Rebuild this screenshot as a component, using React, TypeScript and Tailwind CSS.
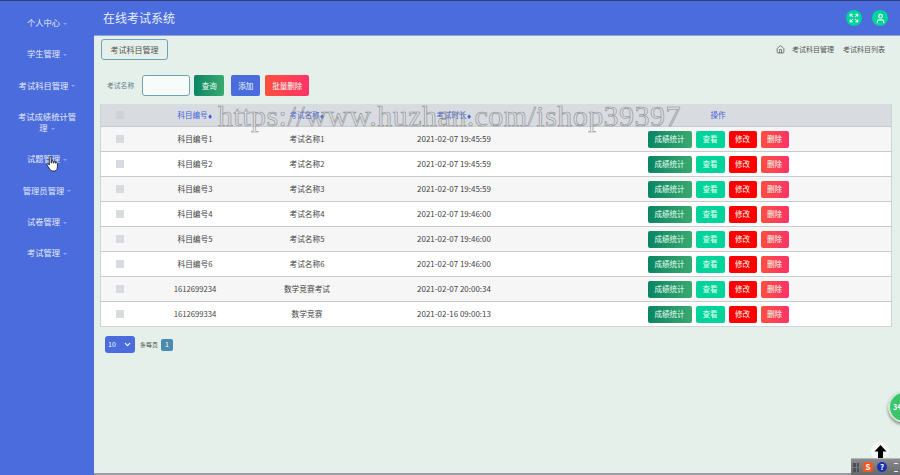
import { Home, Expand, User, ChevronDown } from "lucide-react";

interface Row {
  code: string;
  name: string;
  time: string;
}

const rows: Row[] = [
  { code: "科目编号1", name: "考试名称1", time: "2021-02-07 19:45:59" },
  { code: "科目编号2", name: "考试名称2", time: "2021-02-07 19:45:59" },
  { code: "科目编号3", name: "考试名称3", time: "2021-02-07 19:45:59" },
  { code: "科目编号4", name: "考试名称4", time: "2021-02-07 19:46:00" },
  { code: "科目编号5", name: "考试名称5", time: "2021-02-07 19:46:00" },
  { code: "科目编号6", name: "考试名称6", time: "2021-02-07 19:46:00" },
  { code: "1612699234", name: "数学竞赛考试", time: "2021-02-07 20:00:34" },
  { code: "1612699334", name: "数学竞赛", time: "2021-02-16 09:00:13" },
];

const menu = ["个人中心", "学生管理", "考试科目管理", "考试成绩统计管理", "试题管理", "管理员管理", "试卷管理", "考试管理"];

const gridCols = "grid grid-cols-[38px_112px_112px_182px_1fr] items-center";

function Sidebar() {
  return (
    <div className="w-[94px] shrink-0 bg-[#4a6cdc] pt-[6px] flex flex-col">
      {menu.map((m) => (
        <div key={m} className="px-[14px] py-[10px] text-center text-[8.3px] leading-[11.25px] text-[#e6ebfa]">
          {m}
          <span className="inline-block ml-[3px] align-middle border-x-[2.5px] border-t-[2.5px] border-x-transparent border-t-[#8fa5ea]" />
        </div>
      ))}
    </div>
  );
}

function Actions() {
  return (
    <div className="flex justify-center gap-[4px] text-[7.5px] text-[#eafff6]">
      <button className="w-[44px] h-[17px] rounded-[2px] bg-gradient-to-r from-[#078563] to-[#38a96f]">成绩统计</button>
      <button className="w-[29px] h-[17px] rounded-[2px] bg-[#00d49a]">查看</button>
      <button className="w-[28px] h-[17px] rounded-[2px] bg-[#ff0000]">修改</button>
      <button className="w-[28px] h-[17px] rounded-[2px] bg-gradient-to-r from-[#ff4d3d] to-[#ff3366]">删除</button>
    </div>
  );
}

function HeadCell({ label }: { label: string }) {
  return (
    <span>
      {label}
      <span className="text-[5px]">♦</span>
    </span>
  );
}

export default function App() {
  return (
    <div className="relative h-[475px] w-[900px] overflow-hidden flex flex-col bg-[#e5f0ea] font-['Noto_Sans_CJK_SC','Liberation_Sans',sans-serif]">
      <div className="h-[1px] bg-[#2f3f7c]" />
      <div className="flex flex-1 min-h-0">
        <Sidebar />
        <div className="flex-1 min-w-0 flex flex-col">
          <div className="h-[35px] shrink-0 bg-[#4a6cdc] border-b border-[#8fa5d8] flex items-center pl-[9px] pr-[12px]">
            <span className="text-[12px] text-[#e8edfb] pb-[1px]">在线考试系统</span>
            <div className="ml-auto flex gap-[10px]">
              <div className="w-[16px] h-[16px] rounded-full bg-[#00d49a] flex items-center justify-center">
                <Expand size={10} color="#eafff6" strokeWidth={2.5} />
              </div>
              <div className="w-[16px] h-[16px] rounded-full bg-[#00d49a] flex items-center justify-center">
                <User size={11} color="#eafff6" strokeWidth={2.5} />
              </div>
            </div>
          </div>

          <div className="pl-[6px] pr-[8px] flex-1">
            <div className="flex items-center justify-between mt-[3px]">
              <div className="ml-[1px] w-[67px] h-[21px] border border-[#6fa3b4] rounded-[3px] flex items-center justify-center text-[8px] text-[#555]">
                考试科目管理
              </div>
              <div className="flex items-center pr-[7px] text-[7px] text-[#555]">
                <Home size={9} color="#555" />
                <span className="ml-[7px]">考试科目管理</span>
                <span className="ml-[9px]">考试科目列表</span>
              </div>
            </div>

            <div className="flex items-center mt-[15px] pl-[7px]">
              <span className="text-[6.8px] text-[#5f7f8c]">考试名称</span>
              <input className="ml-[8px] w-[48px] h-[21px] rounded-[3px] border border-[#6fa3b4] bg-[#f7fbfa]" />
              <button className="ml-[4px] w-[30px] h-[21px] rounded-[2px] bg-gradient-to-r from-[#078563] to-[#38a96f] text-[7.5px] text-[#eafff6]">查询</button>
              <button className="ml-[7px] w-[29px] h-[21px] rounded-[2px] bg-[#4a6cdc] text-[7.5px] text-[#eafff6]">添加</button>
              <button className="ml-[5px] w-[44px] h-[21px] rounded-[2px] bg-gradient-to-r from-[#ff4d3d] to-[#ff3366] text-[7.5px] text-[#eafff6]">批量删除</button>
            </div>

            <div className="mt-[8px] border border-[#d0d3d6] border-t-0 bg-white text-[#444] text-[7.5px]">
              <div className={`${gridCols} h-[22px] bg-[#d8dce1] text-[#4463d8] text-center`}>
                <span className="mx-auto w-[8px] h-[8px] bg-[#cfd3d9]" />
                <HeadCell label="科目编号" />
                <HeadCell label="考试名称" />
                <HeadCell label="考试时长" />
                <span>操作</span>
              </div>
              {rows.map((r, i) => (
                <div key={r.code} className={`${gridCols} h-[25px] text-center border-t border-[#c9cccf] ${i % 2 === 0 ? "bg-[#f6f6f7]" : "bg-white"}`}>
                  <span className="mx-auto w-[8px] h-[8px] bg-[#d8dce1]" />
                  <span className="text-[7.7px]">{r.code}</span>
                  <span className="text-[7.7px]">{r.name}</span>
                  <span className="text-[8px]">{r.time}</span>
                  <Actions />
                </div>
              ))}
            </div>

            <div className="flex items-center mt-[9px] pl-[5px]">
              <div className="w-[30px] h-[17px] rounded-[3px] bg-[#4a6cdc] flex items-center justify-between px-[3px] text-[7px] text-white">
                10
                <ChevronDown size={9} color="white" strokeWidth={3} />
              </div>
              <span className="ml-[5px] text-[6px] text-[#555]">条每页</span>
              <span className="ml-[3px] w-[12px] h-[12px] rounded-[2px] bg-[#4a8bb0] text-white text-[7px] flex items-center justify-center">1</span>
            </div>
          </div>
        </div>
      </div>

      {/* watermark */}
      <div className="absolute left-[218px] top-[97px] text-[30px] leading-[38px] tracking-[0.45px] whitespace-nowrap font-['Liberation_Serif',serif] text-transparent [-webkit-text-stroke:0.6px_#8f8f8f]">
        https://www.huzhan.com/ishop39397
      </div>

      {/* captured mouse pointer */}
      <svg className="absolute left-[46px] top-[155px]" width="13" height="17" viewBox="0 0 13 17">
        <path d="M4 1.500c.8 0 1.200.5 1.200 1.200V8l.6-.2V6.500c0-1 1.500-1 1.600 0V8l.6 0V7c0-1 1.500-1 1.600 0v1.200l.5 0c0-1 1.300-.9 1.300.1V12c0 2-1 3.500-2.500 4H6c-1.500-.5-2-1.500-3-3L1 10c-.5-1 .6-1.600 1.300-.9l1 1V2.700C3 2 3.300 1.500 4 1.500z" fill="white" stroke="#222" strokeWidth="0.9" />
      </svg>

      {/* floating badge */}
      <div className="absolute left-[888px] top-[391px] w-[32px] h-[32px] rounded-full bg-[#3cc46a] border-2 border-[#cfe8d6] shadow-[0_2px_3px_#888] pl-[3px] flex items-center text-[7px] font-bold text-white">
        34
      </div>

      {/* desktop tray */}
      <div className="absolute left-[871px] top-[442px] w-[18px] h-[18px] rounded-full bg-white/60" />
      <svg className="absolute left-[874px] top-[445px]" width="13" height="13" viewBox="0 0 13 13">
        <path d="M6.500 0L12.500 6.500H9V13H4V6.500H.5z" fill="#000" />
      </svg>
      <div className="absolute left-[851px] top-[458px] w-[49px] h-[17px] bg-gradient-to-b from-[#8a8c8f] to-[#66686b] border-t border-[#b5b7b9] flex items-center pl-[2px]">
        <div className="w-[6px] h-[9px] grid grid-cols-2 gap-[1px]">
          <span className="bg-[#4d4f52]" />
          <span className="bg-[#4d4f52]" />
          <span className="bg-[#4d4f52]" />
          <span className="bg-[#4d4f52]" />
        </div>
        <span className="ml-[4px] w-[10px] h-[10px] rounded-[2px] bg-[#ef5a22] text-white text-[8px] leading-[10px] font-bold text-center">S</span>
        <span className="ml-[4px] w-[10px] h-[10px] rounded-full bg-[#1c2fb0] text-white text-[8px] leading-[10px] font-bold text-center">?</span>
        <span className="ml-[7px] w-[4px] h-[9px] flex flex-col justify-between">
          <span className="h-[1px] bg-[#e8e8e8]" />
          <span className="h-[1px] bg-[#e8e8e8]" />
        </span>
      </div>
      <div className="absolute left-[94px] bottom-0 w-[757px] h-[2px] bg-[#9a9da0]" />
    </div>
  );
}
